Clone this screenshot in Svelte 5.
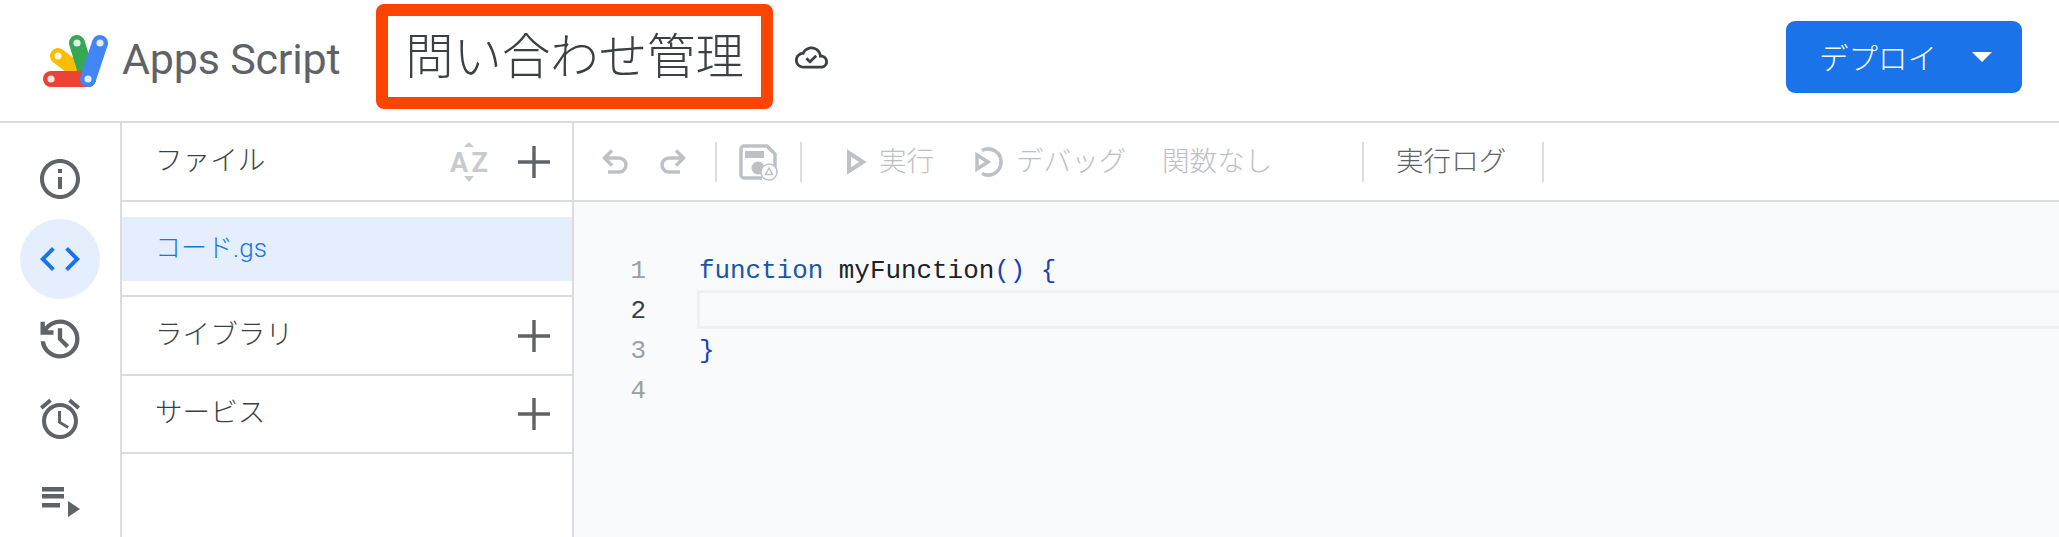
<script>
	const sections = ["ライブラリ", "サービス"];
	const lineNumbers = [1, 2, 3, 4];
</script>

<div class="page">
	<header class="topbar">
		<svg class="logo" viewBox="43 34 66 54" aria-hidden="true">
			<g fill="none" stroke-linecap="round" stroke-width="16">
				<path d="M58 56L88 79" stroke="#fbbc04" />
				<path d="M77 43L88 79" stroke="#34a853" />
				<path d="M51 79H88" stroke="#ea4335" />
				<path d="M100 43L88 79" stroke="#4285f4" />
			</g>
			<g fill="#fff" opacity="0.85">
				<circle cx="51" cy="79" r="3.600" />
				<circle cx="58" cy="56" r="3.600" />
				<circle cx="77" cy="43" r="3.600" />
				<circle cx="100" cy="43" r="3.600" />
				<circle cx="88" cy="79" r="3.600" />
			</g>
		</svg>
		<span class="wordmark">Apps Script</span>

		<div class="title-box">問い合わせ管理</div>

		<svg class="cloud" viewBox="0 0 24 24" aria-hidden="true">
			<path d="M19.350 10.040C18.670 6.590 15.640 4 12 4 9.110 4 6.600 5.640 5.350 8.040 2.340 8.360 0 10.910 0 14c0 3.310 2.690 6 6 6h13c2.760 0 5-2.240 5-5 0-2.640-2.050-4.780-4.650-4.960zM19 18H6c-2.210 0-4-1.790-4-4s1.790-4 4-4h.710C7.370 7.690 9.480 6 12 6c3.040 0 5.500 2.460 5.500 5.500v.500H19c1.660 0 3 1.340 3 3s-1.340 3-3 3z" fill="#3c4043" />
			<path d="M8.300 12.600l2.600 2.600 4.500-4.500" fill="none" stroke="#3c4043" stroke-width="2" />
		</svg>

		<button class="deploy">
			<span>デプロイ</span>
			<svg viewBox="0 0 20 10" aria-hidden="true"><path d="M0 0h20L10 10z" fill="#fff" /></svg>
		</button>
	</header>

	<div class="workspace">
		<nav class="rail">
			<div class="rail-item">
				<svg width="48" height="48" viewBox="0 0 24 24"><path d="M11 7h2v2h-2zm0 4h2v6h-2zm1-9C6.480 2 2 6.480 2 12s4.480 10 10 10 10-4.480 10-10S17.520 2 12 2zm0 18c-4.410 0-8-3.590-8-8s3.590-8 8-8 8 3.590 8 8-3.590 8-8 8z" /></svg>
			</div>
			<div class="rail-item active">
				<svg width="48" height="48" viewBox="0 0 24 24"><path d="M9.400 16.600L4.800 12l4.600-4.600L8 6l-6 6 6 6 1.400-1.400zm5.200 0l4.600-4.600-4.600-4.600L16 6l6 6-6 6-1.400-1.400z" /></svg>
			</div>
			<div class="rail-item">
				<svg width="52" height="52" viewBox="0 0 24 24"><path d="M12 21q-3.450 0-6.012-2.288Q3.425 16.425 3.050 13H5.100q.35 2.600 2.313 4.300Q9.375 19 12 19q2.925 0 4.962-2.038Q19 14.925 19 12q0-2.925-2.038-4.962Q14.925 5 12 5q-1.725 0-3.225.8T6.250 8H9v2H3V4h2v2.350q1.275-1.600 3.113-2.475Q9.950 3 12 3q3.750 0 6.375 2.625T21 12q0 3.750-2.625 6.375T12 21Zm2.800-4.800L11 12.400V7h2v4.600l3.200 3.200Z" /></svg>
			</div>
			<div class="rail-item">
				<svg width="48" height="48" viewBox="0 0 24 24"><path d="M22 5.720l-4.600-3.860-1.290 1.530 4.600 3.860L22 5.720zM7.880 3.390L6.600 1.860 2 5.710l1.290 1.530 4.590-3.850zM12.500 8H11v6l4.750 2.850.75-1.230-4-2.370V8zM12 4c-4.970 0-9 4.030-9 9s4.030 9 9 9c4.970 0 9-4.030 9-9s-4.030-9-9-9zm0 16c-3.870 0-7-3.130-7-7s3.130-7 7-7 7 3.130 7 7-3.130 7-7 7z" /></svg>
			</div>
			<div class="rail-item">
				<svg width="44" height="40" viewBox="0 0 44 40">
					<rect x="4" y="8" width="22" height="4.500" />
					<rect x="4" y="15" width="22" height="4.500" />
					<rect x="4" y="24" width="18" height="4.500" />
					<path d="M30 22l12 8-12 8z" />
				</svg>
			</div>
		</nav>

		<aside class="sidebar">
			<div class="row">
				<span class="label">ファイル</span>
				<svg class="az" viewBox="0 0 40 42" aria-hidden="true">
					<path d="M15 6l5-5 5 5zM15 35h10l-5 6z" fill="#c8cbce" />
					<text x="1" y="31" textLength="38">AZ</text>
				</svg>
				<svg class="plus" viewBox="0 0 32 32"><path d="M14.300 0h3.400v14.300H32v3.400H17.700V32h-3.400V17.700H0v-3.400h14.300z" /></svg>
			</div>
			<div class="files">
				<div class="file">コード.gs</div>
			</div>
			{#each sections as section}
				<div class="row">
					<span class="label">{section}</span>
					<svg class="plus" viewBox="0 0 32 32"><path d="M14.300 0h3.400v14.300H32v3.400H17.700V32h-3.400V17.700H0v-3.400h14.300z" /></svg>
				</div>
			{/each}
		</aside>

		<main class="main">
			<div class="toolbar">
				<svg class="undo" viewBox="0 0 30 28" aria-hidden="true">
					<path d="M12 2.500L4.500 10l7.500 7.500M5 10h14a7 7 0 0 1 0 14H8" />
				</svg>
				<svg class="redo" viewBox="0 0 30 28" aria-hidden="true">
					<path d="M18 2.500l7.500 7.500-7.500 7.500M25 10H11a7 7 0 0 0 0 14h11" />
				</svg>
				<i class="sep sep-a"></i>
				<svg class="save" viewBox="0 0 40 38" aria-hidden="true">
					<path d="M24 35H6a3 3 0 0 1-3-3V6a3 3 0 0 1 3-3h23l8 8v14" />
					<rect class="solid" x="7" y="8" width="19" height="7" />
					<circle class="solid" cx="20" cy="25" r="6.500" />
					<circle class="badge" cx="31" cy="29" r="8" />
					<path class="thin" d="M31 25l3.500 6.500h-7z" />
				</svg>
				<i class="sep sep-b"></i>
				<svg class="run" viewBox="0 0 22 26" aria-hidden="true"><path d="M4 4l14 9-14 9z" /></svg>
				<span class="tool-text run-text">実行</span>
				<svg class="debug" viewBox="0 0 32 32" aria-hidden="true">
					<path d="M8 4.500a13 13 0 1 1 0 23" />
					<path d="M3 9l11 7-11 7z" />
				</svg>
				<span class="tool-text debug-text">デバッグ</span>
				<span class="tool-text fn-text">関数なし</span>
				<i class="sep sep-c"></i>
				<span class="tool-text log-text">実行ログ</span>
				<i class="sep sep-d"></i>
			</div>

			<div class="editor">
				<div class="gutter">
					{#each lineNumbers as n}
						<div class="num" class:current={n === 2}>{n}</div>
					{/each}
				</div>
				<div class="code">
					<div class="line"><span class="kw">function</span> myFunction<span class="br">()</span> <span class="br">&#123;</span></div>
					<div class="line current-line"></div>
					<div class="line"><span class="br">&#125;</span></div>
					<div class="line"></div>
				</div>
			</div>
		</main>
	</div>
</div>

<style>
	:global(body) {
		margin: 0;
		background: #fff;
	}

	.page {
		width: 2059px;
		height: 537px;
		overflow: hidden;
		display: flex;
		flex-direction: column;
		font-family: Roboto, "Noto Sans CJK JP", sans-serif;
		color: #3c4043;
	}

	.topbar {
		height: 121px;
		flex: none;
		display: flex;
		align-items: flex-start;
		border-bottom: 2px solid #dadce0;
	}

	.logo {
		width: 66px;
		height: 54px;
		margin: 34px 0 0 43px;
	}

	.wordmark {
		margin: 32px 0 0 13px;
		width: 254px;
		font-size: 43px;
		line-height: 54px;
		letter-spacing: -0.2px;
		color: #5f6368;
	}

	.title-box {
		width: 397px;
		height: 105px;
		margin-top: 4px;
		padding-bottom: 8px;
		box-sizing: border-box;
		border: 12px solid #fa4400;
		border-radius: 8px;
		display: flex;
		align-items: center;
		justify-content: center;
		font-family: "Noto Sans CJK JP", sans-serif;
		font-weight: 300;
		font-size: 48.400px;
		color: #3c4043;
	}

	.cloud {
		width: 33px;
		height: 33px;
		margin: 41px 0 0 22px;
	}

	.deploy {
		margin: 21px 37px 0 auto;
		width: 236px;
		height: 72px;
		padding: 0 30px 2px 33px;
		box-sizing: border-box;
		border: none;
		border-radius: 9px;
		background: #1a73e8;
		color: #fff;
		font-family: "Noto Sans CJK JP", sans-serif;
		font-weight: 300;
		font-size: 29.500px;
		display: flex;
		align-items: center;
		justify-content: space-between;
	}

	.deploy svg {
		width: 20px;
		height: 10px;
		margin-top: 2px;
	}

	.workspace {
		flex: 1;
		display: flex;
		min-height: 0;
	}

	.rail {
		width: 120px;
		flex: none;
		padding-top: 16px;
		border-right: 2px solid #dadce0;
	}

	.rail-item {
		height: 80px;
		width: 80px;
		margin-left: 20px;
		display: flex;
		align-items: center;
		justify-content: center;
		border-radius: 50%;
	}

	.rail-item svg {
		fill: #5f6368;
		flex: none;
	}

	.rail-item.active {
		background: #e4eefd;
	}

	.rail-item.active svg {
		fill: #1a73e8;
	}

	.sidebar {
		width: 450px;
		flex: none;
		border-right: 2px solid #dadce0;
	}

	.row {
		height: 77px;
		display: flex;
		align-items: center;
		padding: 0 22px 0 33px;
		border-bottom: 2px solid #dadce0;
	}

	.row:last-child {
		height: 76px;
	}

	.label {
		font-family: "Noto Sans CJK JP", sans-serif;
		font-weight: 300;
		font-size: 27.600px;
		margin-right: auto;
		margin-top: -8px;
	}

	.az {
		width: 40px;
		height: 42px;
		margin: 0 29px 0 0;
	}

	.az text {
		font-family: Roboto, sans-serif;
		font-weight: 700;
		font-size: 27px;
		fill: #c8cbce;
	}

	.plus {
		width: 32px;
		height: 32px;
		fill: #5f6368;
	}

	.files {
		height: 95px;
		padding-top: 15px;
		box-sizing: border-box;
		border-bottom: 2px solid #dadce0;
	}

	.file {
		height: 64px;
		line-height: 62px;
		padding-left: 33px;
		background: #e4eefd;
		color: #1a73e8;
		font-size: 26px;
		font-weight: 300;
	}

	.main {
		flex: 1;
		min-width: 0;
		display: flex;
		flex-direction: column;
	}

	.toolbar {
		height: 77px;
		flex: none;
		display: flex;
		align-items: center;
		border-bottom: 2px solid #dadce0;
		color: #bdc1c6;
	}

	.toolbar svg {
		flex: none;
		fill: none;
		stroke: #bdc1c6;
		stroke-width: 3.500;
	}

	.undo,
	.redo {
		width: 30px;
		height: 28px;
	}

	.undo {
		margin-left: 26px;
	}

	.redo {
		margin-left: 28px;
	}

	.sep {
		width: 2px;
		height: 40px;
		flex: none;
		background: #dadce0;
	}

	.sep-a {
		margin-left: 27px;
	}

	.save {
		width: 40px;
		height: 38px;
		margin-left: 21px;
	}

	.save .solid {
		fill: #bdc1c6;
		stroke: none;
	}

	.save .badge {
		fill: #fff;
		stroke-width: 1.500;
	}

	.save .thin {
		stroke-width: 1.500;
	}

	.sep-b {
		margin-left: 22px;
	}

	.run {
		width: 22px;
		height: 26px;
		margin-left: 43px;
	}

	.toolbar .run {
		stroke-width: 4;
	}

	.tool-text {
		font-family: "Noto Sans CJK JP", sans-serif;
		font-weight: 300;
		font-size: 27.600px;
		flex: none;
		margin-top: -5px;
		white-space: nowrap;
	}

	.run-text {
		margin-left: 12px;
		width: 56px;
	}

	.debug {
		width: 32px;
		height: 32px;
		margin-left: 39px;
	}

	.debug-text {
		margin-left: 10px;
		width: 111px;
	}

	.fn-text {
		margin-left: 35px;
		width: 111px;
	}

	.sep-c {
		margin-left: 89px;
	}

	.log-text {
		margin-left: 32px;
		width: 111px;
		color: #5f6368;
	}

	.sep-d {
		margin-left: 35px;
	}

	.editor {
		flex: 1;
		display: flex;
		padding-top: 49px;
		background: #f8fafc;
		font-family: "Liberation Mono", monospace;
		font-size: 25.900px;
		line-height: 40px;
		min-height: 0;
	}

	.gutter {
		width: 72px;
		flex: none;
		text-align: right;
		color: #9aa0a6;
	}

	.num.current {
		color: #3c4043;
	}

	.code {
		flex: 1;
		margin-left: 51px;
		color: #202124;
	}

	.line {
		height: 40px;
		padding-left: 2px;
		white-space: pre;
	}

	.current-line {
		height: 39px;
		margin: -1px 0 2px;
		box-sizing: border-box;
		border: 3px solid #eff0f2;
		border-right: none;
	}

	.kw {
		color: #1a56a8;
	}

	.br {
		color: #1a3fc0;
	}
</style>
